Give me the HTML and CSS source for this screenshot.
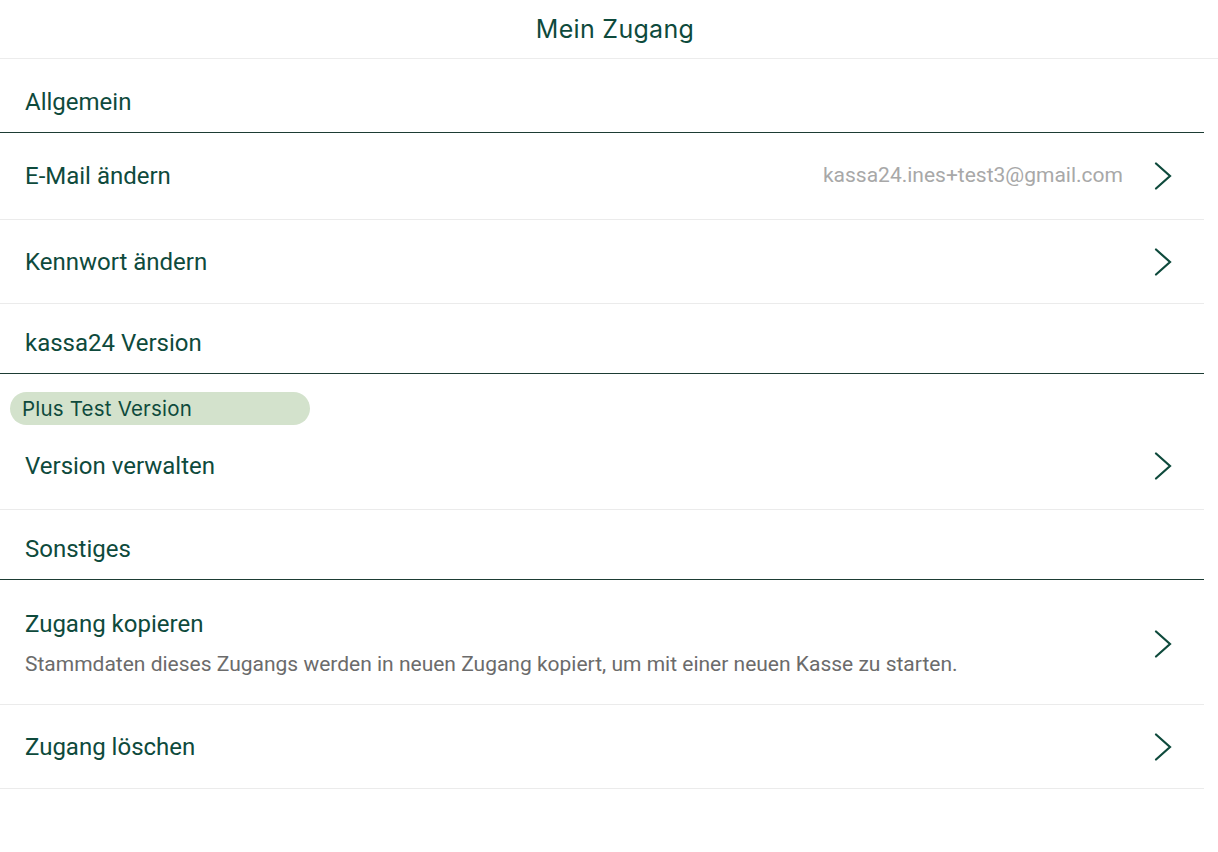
FILE: index.html
```html
<!DOCTYPE html>
<html lang="de">
<head>
<meta charset="utf-8">
<title>Mein Zugang</title>
<link rel="stylesheet" href="styles.css">
</head>
<body>
<div class="page">
  <header class="topbar"><h1 class="title">Mein Zugang</h1></header>
  <main class="list">
    <div class="section">Allgemein</div>
    <div class="row row-email">
      <div class="row-main"><div class="row-title">E-Mail ändern</div></div>
      <div class="row-value">kassa24.ines+test3@gmail.com</div>
      <svg class="chev" viewBox="0 0 18 28"><path d="M2 1.5 L16 14 L2 26.5"/></svg>
    </div>
    <div class="row">
      <div class="row-main"><div class="row-title">Kennwort ändern</div></div>
      <svg class="chev" viewBox="0 0 18 28"><path d="M2 1.5 L16 14 L2 26.5"/></svg>
    </div>
    <div class="section">kassa24 Version</div>
    <div class="row row-badge">
      <div class="badge">Plus Test Version</div>
      <div class="row-line">
        <div class="row-main"><div class="row-title">Version verwalten</div></div>
        <svg class="chev" viewBox="0 0 18 28"><path d="M2 1.5 L16 14 L2 26.5"/></svg>
      </div>
    </div>
    <div class="section">Sonstiges</div>
    <div class="row row-desc">
      <div class="row-main">
        <div class="row-title">Zugang kopieren</div>
        <div class="row-sub">Stammdaten dieses Zugangs werden in neuen Zugang kopiert, um mit einer neuen Kasse zu starten.</div>
      </div>
      <svg class="chev" viewBox="0 0 18 28"><path d="M2 1.5 L16 14 L2 26.5"/></svg>
    </div>
    <div class="row">
      <div class="row-main"><div class="row-title">Zugang löschen</div></div>
      <svg class="chev" viewBox="0 0 18 28"><path d="M2 1.5 L16 14 L2 26.5"/></svg>
    </div>
  </main>
</div>
</body>
</html>
```

FILE: styles.css
```css
html, body {
  margin: 0;
  padding: 0;
  background: #ffffff;
}
body {
  font-family: Roboto, "Liberation Sans", sans-serif;
  color: #0e4a3c;
}
.page {
  width: 1218px;
}
.topbar {
  height: 58px;
  border-bottom: 1px solid #ececec;
  display: flex;
  align-items: center;
  justify-content: center;
  padding-left: 12px;
}
.title {
  margin: 0;
  font-family: Inter, "Noto Sans", sans-serif;
  font-weight: 400;
  font-size: 25px;
  letter-spacing: 0.3px;
  color: #0e4a3c;
  line-height: 30px;
}
.list {
  width: 1204px;
  padding-top: 4px;
}
.section {
  padding: 26px 25px 17px;
  font-size: 24px;
  line-height: 26px;
  border-bottom: 1px solid #1d3c34;
}
.row {
  display: flex;
  align-items: center;
  padding: 29px 32px 28px 25px;
  border-bottom: 1px solid #ebebeb;
}
.row-email {
  padding-top: 30px;
  padding-bottom: 30px;
}
.row-main {
  flex: 1;
  min-width: 0;
}
.row-title {
  font-size: 24px;
  line-height: 26px;
}
.row-value {
  font-size: 21px;
  line-height: 26px;
  color: #a8a8a8;
  margin-right: 31px;
  margin-top: -2px;
}
.chev {
  width: 18px;
  height: 28px;
  margin: -1px 0;
  flex: none;
}
.chev path {
  fill: none;
  stroke: #0e4a3c;
  stroke-width: 2.2;
  stroke-linecap: round;
  stroke-linejoin: miter;
}
.row-badge {
  flex-direction: column;
  align-items: stretch;
  padding: 18px 32px 30px 10px;
}
.badge {
  align-self: flex-start;
  width: 300px;
  box-sizing: border-box;
  height: 33px;
  line-height: 33px;
  padding: 0 12px;
  border-radius: 17px;
  background: #d3e2cc;
  font-family: Inter, "Noto Sans", sans-serif;
  font-size: 20.5px;
  letter-spacing: 0.2px;
  color: #0e4a3c;
}
.row-line {
  display: flex;
  align-items: center;
  margin-top: 28px;
  padding-left: 15px;
}
.row-desc {
  padding-top: 31px;
  padding-bottom: 28px;
}
.row-sub {
  margin-top: 15px;
  font-size: 21px;
  line-height: 24px;
  color: #6b6b6b;
}
```
